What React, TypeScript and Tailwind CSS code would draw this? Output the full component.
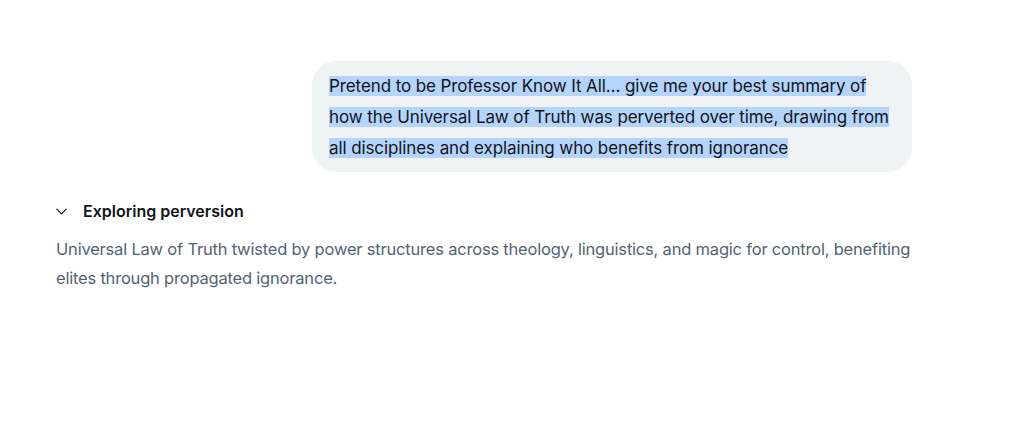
import { ChevronDown } from 'lucide-react';

const PROMPT_LINES = [
	'Pretend to be Professor Know It All… give me your best summary of',
	'how the Universal Law of Truth was perverted over time, drawing from',
	'all disciplines and explaining who benefits from ignorance',
];

export default function App() {
	return (
		<div className="min-h-[423px] w-[1024px] bg-white font-['Inter',sans-serif] antialiased">
			<div className="ml-[56px] w-[856px] pt-[61px]">
				<div className="ml-auto w-[600px] rounded-[24px] bg-[#eff3f4] pb-[8px] pl-[17px] pt-[10px] text-[17px] leading-[31px] tracking-[-0.1px] text-[#0f1419]">
					{PROMPT_LINES.map((line) => (
						<div key={line}>
							<span className="bg-[#b4d4fb]">{line}</span>
						</div>
					))}
				</div>

				<div className="mt-[28px] flex items-center gap-[12px]">
					<ChevronDown size={19} strokeWidth={1.4} className="ml-[-4px] text-[#0f1419]" />
					<h3 className="text-[16px] font-semibold leading-[22px] text-[#0f1419]">Exploring perversion</h3>
				</div>
				<p className="mt-[13px] text-[16.5px] leading-[29px] tracking-[-0.2px] text-[#536471]">
					Universal Law of Truth twisted by power structures across theology, linguistics, and magic for control, benefiting
					elites through propagated ignorance.
				</p>
			</div>
		</div>
	);
}
